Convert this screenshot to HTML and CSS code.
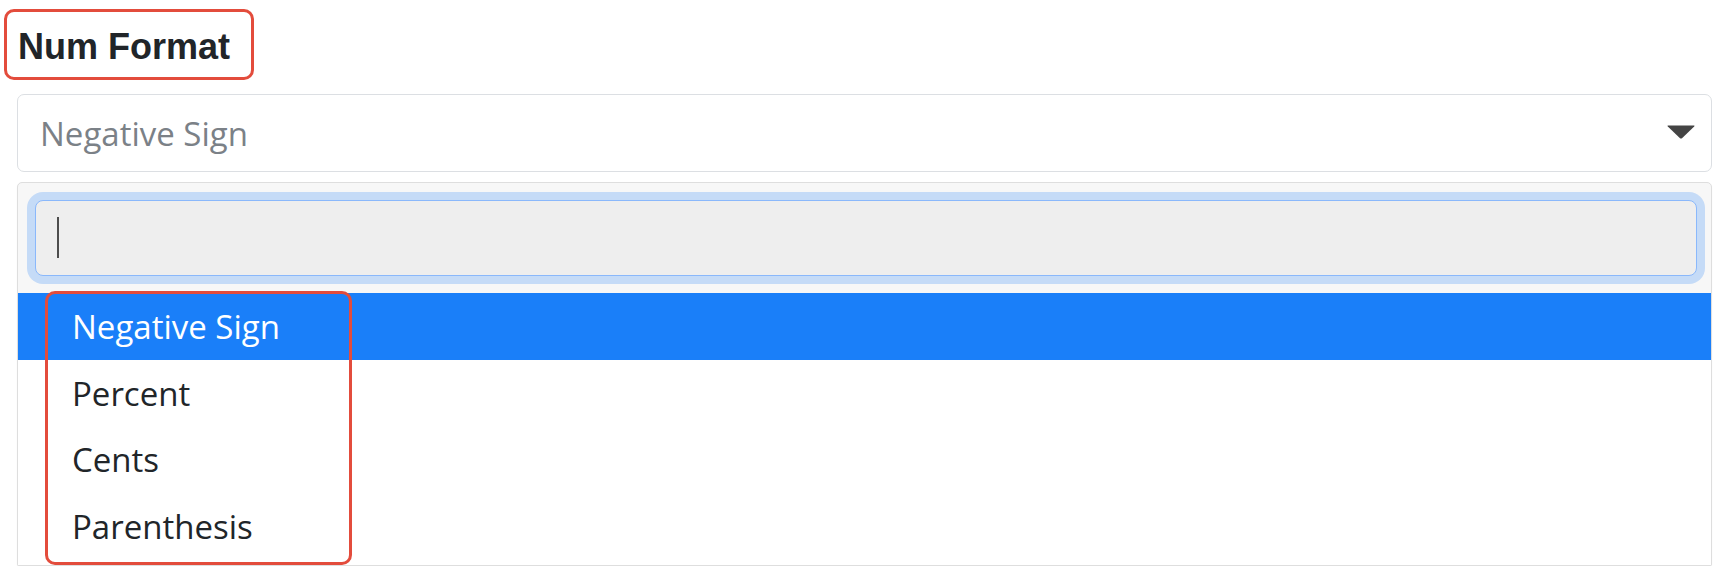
FILE: index.html
```html
<!DOCTYPE html>
<html lang="en">
<head>
<meta charset="utf-8">
<title>Num Format</title>
<link rel="stylesheet" href="styles.css">
</head>
<body>
<div class="page">
  <div class="label-row"><h2 class="label">Num Format</h2></div>
  <div class="select">
    <span class="placeholder">Negative Sign</span>
    <svg class="caret" width="28" height="14" viewBox="0 0 28 14"><path d="M1 0.5 H27 Q28 0.5 27.2 1.4 L15 13.2 Q14 14 13 13.2 L0.8 1.4 Q0 0.5 1 0.5 Z" fill="#444"/></svg>
  </div>
  <div class="panel">
    <div class="search-wrap">
      <div class="search"><span class="caret-line"></span></div>
    </div>
    <ul class="options">
      <li class="option active">Negative Sign</li>
      <li class="option">Percent</li>
      <li class="option">Cents</li>
      <li class="option">Parenthesis</li>
      <li class="highlight-box" aria-hidden="true"></li>
    </ul>
  </div>
</div>
</body>
</html>
```

FILE: styles.css
```css
html, body {
  margin: 0;
  padding: 0;
  background: #ffffff;
}

.page {
  padding: 9px 17px 0 17px;
  font-family: "Open Sans", "Noto Sans", sans-serif;
}

.label-row {
  margin-left: -13px;
}

.label {
  display: inline-block;
  margin: 0;
  padding: 14px 21px 9px 11px;
  border: 3px solid #e34c3c;
  border-radius: 10px;
  font-family: "Liberation Sans", Arial, sans-serif;
  font-weight: bold;
  font-size: 36px;
  line-height: 42px;
  color: #212529;
}

.select {
  margin-top: 14px;
  height: 78px;
  box-sizing: border-box;
  border: 1px solid #dcdfe3;
  border-radius: 7px;
  display: flex;
  align-items: center;
  justify-content: space-between;
  padding: 0 16px 0 22px;
  background: #fff;
}

.placeholder {
  font-size: 33px;
  color: #7b8187;
  line-height: 43.5px;
  padding-top: 1px;
}

.caret {
  display: block;
  margin-top: -2px;
}

.panel {
  margin-top: 10px;
  border: 1px solid #dedede;
  border-radius: 5px 5px 2px 2px;
  background: #f7f7f7;
  box-shadow: 0 1px 1px rgba(0,0,0,0.08);
}

.search-wrap {
  padding: 17px 14px 17px 17px;
}

.search {
  height: 76px;
  box-sizing: border-box;
  border: 1px solid #8ab8fb;
  border-radius: 8px;
  background: #eeeeee;
  box-shadow: 0 0 0 8px #c5dbf7;
  display: flex;
  align-items: center;
  padding-left: 21px;
}

.caret-line {
  display: block;
  width: 2px;
  height: 41px;
  background: #4d4d4d;
  margin-top: -1px;
}

.options {
  list-style: none;
  margin: 0;
  padding: 0 0 6px 0;
  background: #ffffff;
  position: relative;
}

.option {
  height: 66.5px;
  box-sizing: border-box;
  padding: 12px 0 11px 54px;
  font-size: 33px;
  line-height: 43.5px;
  color: #212529;
}

.option.active {
  background: #1a7ff9;
  color: #ffffff;
}

.highlight-box {
  position: absolute;
  left: 27px;
  top: -2px;
  width: 307px;
  height: 274px;
  box-sizing: border-box;
  border: 3px solid #e34c3c;
  border-radius: 10px;
  pointer-events: none;
}
```
